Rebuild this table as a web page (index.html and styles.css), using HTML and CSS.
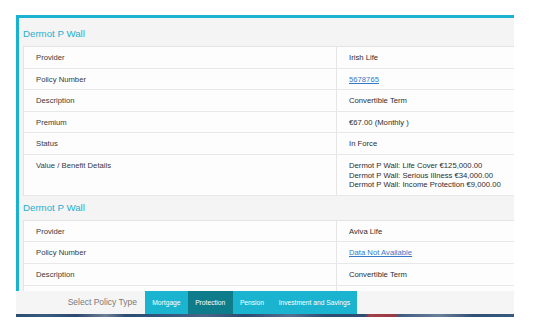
FILE: index.html
```html
<!DOCTYPE html>
<html>
<head>
<meta charset="utf-8">
<link rel="stylesheet" href="styles.css">
</head>
<body>
<div class="frame">
  <div class="panel">
    <div class="section-title">Dermot P Wall</div>
    <div class="policy-table">
      <div class="row"><div class="label">Provider</div><div class="value">Irish Life</div></div>
      <div class="row"><div class="label">Policy Number</div><div class="value"><a class="link" href="#">5678765</a></div></div>
      <div class="row"><div class="label">Description</div><div class="value">Convertible Term</div></div>
      <div class="row"><div class="label">Premium</div><div class="value">€67.00 (Monthly )</div></div>
      <div class="row"><div class="label">Status</div><div class="value">In Force</div></div>
      <div class="row"><div class="label">Value / Benefit Details</div><div class="value">Dermot P Wall: Life Cover €125,000.00<br>Dermot P Wall: Serious Illness €34,000.00<br>Dermot P Wall: Income Protection €9,000.00</div></div>
    </div>
    <div class="section-title">Dermot P Wall</div>
    <div class="policy-table">
      <div class="row"><div class="label">Provider</div><div class="value">Aviva Life</div></div>
      <div class="row"><div class="label">Policy Number</div><div class="value"><a class="link" href="#">Data Not Available</a></div></div>
      <div class="row"><div class="label">Description</div><div class="value">Convertible Term</div></div>
      <div class="row row-empty"><div class="label"></div><div class="value"></div></div>
    </div>
  </div>
  <div class="footer-bar">
    <div class="footer-label">Select Policy Type</div>
    <div class="tab">Mortgage</div>
    <div class="tab active">Protection</div>
    <div class="tab">Pension</div>
    <div class="tab">Investment and Savings</div>
  </div>
  <div class="photo-strip"></div>
</div>
</body>
</html>
```

FILE: styles.css
```css
* { box-sizing: border-box; }
html, body { margin: 0; padding: 0; background: #ffffff; }
body { font-family: "Liberation Sans", Arial, sans-serif; }

.frame {
  margin: 15px 0 0 16px;
  width: 498px;
  display: flex;
  flex-direction: column;
  overflow: hidden;
}

.panel {
  height: 276px;
  overflow: hidden;
  background: #f4f4f4;
  border-top: 3px solid #19b3cf;
  border-left: 3px solid #19b3cf;
  padding: 4px 0 0 4px;
}

.section-title {
  height: 24px;
  line-height: 24px;
  font-size: 9.7px;
  color: #1fb0cf;
  white-space: nowrap;
}

.policy-table {
  width: 624px;
  background: #fdfdfd;
  border-top: 1px solid #e4e4e4;
  border-left: 1px solid #e4e4e4;
}

.row {
  display: grid;
  grid-template-columns: 312px 312px;
  border-bottom: 1px solid #e8e8e8;
}

.row-empty { height: 21.6px; }

.label, .value {
  padding: 6px 12px 5px 12px;
  font-size: 7.7px;
  line-height: 9.6px;
  color: #3a3a3a;
  white-space: nowrap;
}

.value { border-left: 1px solid #e6e6e6; color: #2e2e2e; }

.link { color: #3579c8; text-decoration: underline; }

.footer-bar {
  height: 23px;
  background: #f5f5f5;
  display: flex;
  align-items: stretch;
}

.footer-label {
  width: 121px;
  margin-right: 8px;
  text-align: right;
  font-size: 8.5px;
  line-height: 23px;
  color: #7a7a7a;
  white-space: nowrap;
}

.tab {
  background: #1ab4d0;
  color: #ffffff;
  font-size: 6.7px;
  line-height: 23px;
  padding: 0 7.3px;
  white-space: nowrap;
}

.tab.active { background: #0f7c8c; }

.photo-strip {
  height: 3px;
  background: linear-gradient(90deg,
    #2c4c72 0%, #3a5a80 6%, #2a4870 12%, #6f7f95 18%, #2c4c72 22%,
    #34557c 30%, #4a6688 38%, #2a4a70 46%, #55708f 55%, #2c4c72 62%,
    #2c4c72 70%, #a04048 71%, #9c3a44 76%, #3e5c80 77%, #6a7f99 85%,
    #2e4e75 92%, #3a5a80 100%);
}
```
